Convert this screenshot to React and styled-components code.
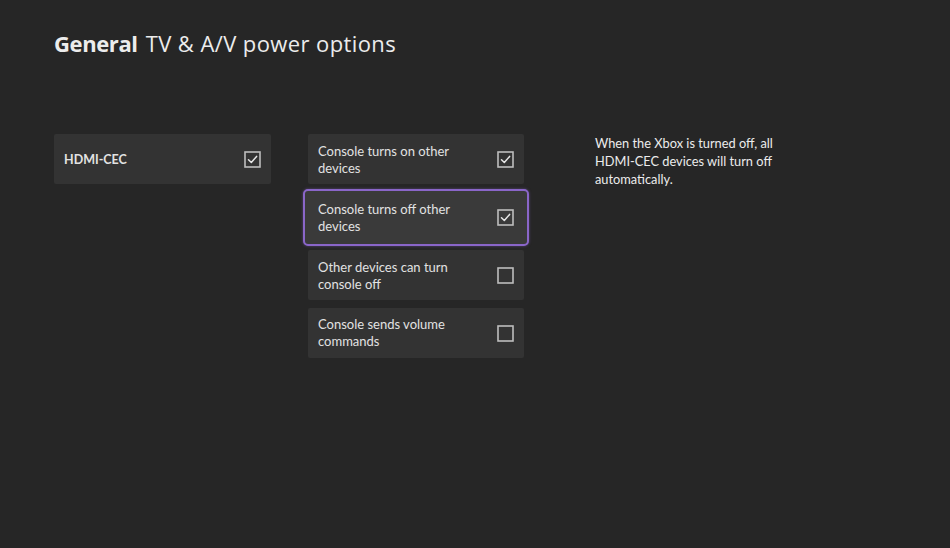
import React from 'react';
import styled, { createGlobalStyle } from 'styled-components';

const GlobalStyle = createGlobalStyle`
  html, body {
    margin: 0;
    padding: 0;
    background: #262626;
  }
  body {
    font-family: Lato, "Noto Sans", sans-serif;
    color: #e4e4e4;
  }
`;

const options = [
  { label: 'Console turns on other devices', checked: true },
  { label: 'Console turns off other devices', checked: true, focused: true },
  { label: 'Other devices can turn console off', checked: false },
  { label: 'Console sends volume commands', checked: false },
];

const CheckIcon = ({ checked }) => (
  <svg width="17" height="17" viewBox="0 0 17 17" fill="none">
    <rect x="1" y="1" width="15" height="15" stroke="#bdbdbd" strokeWidth="1.6" />
    {checked && (
      <path d="M4.5 8.8 L7.3 11.5 L12.6 5.4" stroke="#e6e6e6" strokeWidth="1.5" strokeLinecap="round" strokeLinejoin="round" />
    )}
  </svg>
);

const App = () => {
  return (
    <Page>
      <GlobalStyle />
      <Title>
        <b>General</b> TV &amp; A/V power options
      </Title>
      <Columns>
        <LeftColumn>
          <Tile>
            <MainLabel>HDMI-CEC</MainLabel>
            <CheckIcon checked />
          </Tile>
        </LeftColumn>
        <MiddleColumn>
          {options.map(o => (
            <Tile key={o.label} $focused={o.focused}>
              <Label>{o.label}</Label>
              <CheckIcon checked={o.checked} />
            </Tile>
          ))}
        </MiddleColumn>
        <Description>
          When the Xbox is turned off, all HDMI-CEC devices will turn off automatically.
        </Description>
      </Columns>
    </Page>
  );
};
export default App;

const Page = styled.div`
  width: 950px;
  height: 548px;
  box-sizing: border-box;
  padding: 28px 0 0 54px;
  background: #262626;
`;

const Title = styled.h1`
  margin: 0;
  font-family: "Open Sans", "Noto Sans", sans-serif;
  font-size: 22px;
  font-weight: 400;
  color: #ececec;
  letter-spacing: 0.4px;

  b {
    font-weight: 700;
    letter-spacing: -0.4px;
    margin-right: 2px;
  }
`;

const Columns = styled.div`
  display: flex;
  align-items: flex-start;
  margin-top: 76px;
`;

const LeftColumn = styled.div`
  width: 217px;
  margin-right: 37px;
`;

const MiddleColumn = styled.div`
  width: 216px;
  display: flex;
  flex-direction: column;
  gap: 7.5px;
  margin-right: 71px;
`;

const Tile = styled.div`
  box-sizing: border-box;
  display: flex;
  align-items: center;
  justify-content: space-between;
  height: 50px;
  padding: 1px 10px 0 10px;
  background: #333333;
  border-radius: 2px;

  ${({ $focused }) =>
    $focused &&
    `
    height: 57px;
    margin: -3px -5px;
    padding: 1px 13px 0 13px;
    background: #3a3a3a;
    border: 2px solid #8a66c9;
    border-radius: 5px;
    box-shadow: 0 0 3px rgba(138, 102, 201, 0.5);
  `}
`;

const MainLabel = styled.span`
  font-size: 12.5px;
  font-weight: 700;
  color: #e2e2e2;
`;

const Label = styled.span`
  width: 155px;
  font-size: 13px;
  line-height: 17px;
  color: #e2e2e2;
`;

const Description = styled.p`
  margin: 0;
  width: 210px;
  font-size: 12.8px;
  line-height: 18px;
  color: #ececec;
`;
